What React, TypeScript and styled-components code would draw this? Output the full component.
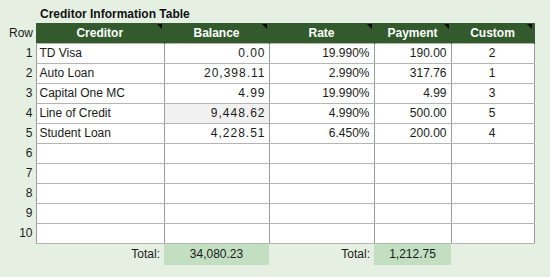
import styled, { createGlobalStyle } from "styled-components";

const Global = createGlobalStyle`
  html, body {
    margin: 0;
    padding: 0;
    background: #e5f0e3;
  }
`;

const rows = [
  { creditor: "TD Visa", balance: "0.00", rate: "19.990%", payment: "190.00", custom: "2" },
  { creditor: "Auto Loan", balance: "20,398.11", rate: "2.990%", payment: "317.76", custom: "1" },
  { creditor: "Capital One MC", balance: "4.99", rate: "19.990%", payment: "4.99", custom: "3" },
  { creditor: "Line of Credit", balance: "9,448.62", rate: "4.990%", payment: "500.00", custom: "5", shaded: true },
  { creditor: "Student Loan", balance: "4,228.51", rate: "6.450%", payment: "200.00", custom: "4" },
];

export default () => {
  const all = Array.from({ length: 10 }, (_, i) => rows[i]);
  return (
    <Page>
      <Global />
      <Title>Creditor Information Table</Title>
      <Sheet>
        <colgroup>
          <col style={{ width: 36 }} />
          <col style={{ width: 128 }} />
          <col style={{ width: 105 }} />
          <col style={{ width: 105 }} />
          <col style={{ width: 77 }} />
          <col style={{ width: 83 }} />
        </colgroup>
        <thead>
          <tr>
            <RowNum>Row</RowNum>
            <Head>Creditor</Head>
            <Head>Balance</Head>
            <Head>Rate</Head>
            <Head>Payment</Head>
            <Head>Custom</Head>
          </tr>
        </thead>
        <tbody>
          {all.map((r, i) => (
            <tr key={i}>
              <RowNum>{i + 1}</RowNum>
              <Cell>{r?.creditor}</Cell>
              <Cell $align="right" $spaced $shaded={r?.shaded}>
                {r?.balance}
              </Cell>
              <Cell $align="right">{r?.rate}</Cell>
              <Cell $align="right">{r?.payment}</Cell>
              <Cell $align="center">{r?.custom}</Cell>
            </tr>
          ))}
          <TotalRow>
            <td />
            <TotalLabel>Total:</TotalLabel>
            <TotalValue>34,080.23</TotalValue>
            <TotalLabel>Total:</TotalLabel>
            <TotalValue>1,212.75</TotalValue>
            <td />
          </TotalRow>
        </tbody>
      </Sheet>
    </Page>
  );
};

const Page = styled.div`
  width: 550px;
  height: 277px;
  background: #e5f0e3;
  font-family: "Liberation Sans", Arial, sans-serif;
  font-size: 12px;
  color: #1a1a1a;
  overflow: hidden;
`;

const Title = styled.div`
  height: 23px;
  padding-left: 40px;
  line-height: 29px;
  font-weight: bold;
  font-size: 12px;
  color: #111;
  box-sizing: border-box;
`;

const Sheet = styled.table`
  table-layout: fixed;
  border-collapse: collapse;
  width: 534px;
  tr {
    height: 20px;
  }
`;

const RowNum = styled.td`
  text-align: right;
  padding: 0 3px 0 0;
`;

const Head = styled.th`
  position: relative;
  background: #325a2d;
  color: #fff;
  font-weight: bold;
  text-align: center;
  padding: 0;
  border-right: 1px solid #325a2d;
  &::after {
    content: "";
    position: absolute;
    top: 1px;
    right: 2px;
    border-top: 5px solid #000;
    border-left: 5px solid transparent;
  }
`;

const Cell = styled.td<{ $align?: string; $spaced?: boolean; $shaded?: boolean }>`
  border: 1px solid #b4b4b4;
  border-left-color: #9c9c9c;
  border-right-color: #9c9c9c;
  background: ${(p) => (p.$shaded ? "#f1f1f1" : "#fff")};
  text-align: ${(p) => p.$align || "left"};
  padding: 0 ${(p) => (p.$spaced ? "3px" : "4px")} 0 3px;
  white-space: nowrap;
  height: 19px;
  letter-spacing: ${(p) => (p.$spaced ? "1px" : "normal")};
`;

const TotalRow = styled.tr`
  td {
    height: 19px;
  }
`;

const TotalLabel = styled.td`
  text-align: right;
  padding: 0 4px 0 0;
`;

const TotalValue = styled.td`
  background: #c3dfc1;
  text-align: center;
  padding: 0;
`;
